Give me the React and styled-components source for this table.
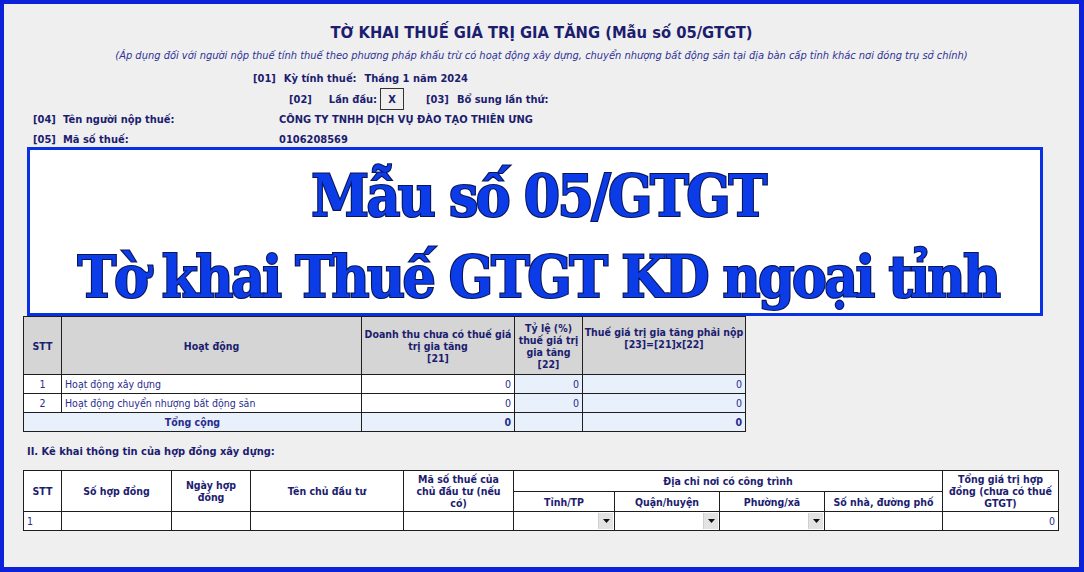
import React from 'react';
import styled, { createGlobalStyle } from 'styled-components';

const GlobalStyle = createGlobalStyle`
  html, body {
    margin: 0;
    padding: 0;
    background: #efefef;
  }
`;

const NAVY = '#1c1d6f';
const INK = '#2a2b8c';

const Frame = styled.div`
  box-sizing: border-box;
  width: 1084px;
  height: 572px;
  border-style: solid;
  border-color: #0b22d8;
  border-width: 4px 5px 5px 4px;
  background: #efefef;
  padding-top: 19px;
  font-family: "DejaVu Sans", sans-serif;
  font-stretch: condensed;
  color: ${NAVY};
  overflow: hidden;
`;

const Title = styled.div`
  text-align: center;
  font-size: 16.4px;
  font-weight: bold;
  line-height: 20px;
`;

const Subtitle = styled.div`
  text-align: center;
  font-size: 11px;
  font-style: italic;
  line-height: 20px;
  margin-top: 3px;
  color: #2e3296;
`;

const FieldRow = styled.div`
  display: flex;
  align-items: center;
  height: 20px;
  font-size: 11px;
  font-weight: bold;
  padding-left: ${(p) => p.$indent}px;
  gap: ${(p) => p.$gap ?? 8}px;
  margin-top: ${(p) => p.$top || 0}px;
`;

const Spaced = styled.span`
  margin-left: ${(p) => p.$ml || 0}px;
`;

const CheckBox = styled.span`
  box-sizing: border-box;
  width: 24px;
  height: 22px;
  margin-left: ${(p) => p.$ml || 0}px;
  border: 1px solid #333;
  display: flex;
  align-items: center;
  justify-content: center;
  font-weight: bold;
`;

const InfoRow = styled.div`
  display: grid;
  grid-template-columns: 30px 216px auto;
  align-items: center;
  height: 20px;
  padding-left: 29px;
  font-size: 11px;
  font-weight: bold;
`;

const Banner = styled.div`
  box-sizing: border-box;
  width: 1016px;
  height: 169px;
  margin: -2px 0 0 23px;
  border: 3px solid #0a30e4;
  background: #fff;
  display: flex;
  flex-direction: column;
  align-items: center;
  justify-content: flex-start;
  padding: 6px 0 0 6px;
`;

const BannerLine = styled.div`
  font-family: "DejaVu Serif", serif;
  font-weight: bold;
  font-stretch: condensed;
  font-size: 58px;
  line-height: 81px;
  letter-spacing: -2.5px;
  color: #0c3ce8;
  -webkit-text-stroke: 2.2px #0b1656;
  paint-order: stroke fill;
  white-space: nowrap;
`;

const Table = styled.table`
  border-collapse: collapse;
  table-layout: fixed;
  width: ${(p) => p.$w}px;
  margin-left: 19px;
  font-size: 10.5px;
`;

const Th = styled.th`
  border: 1px solid #1e1e1e;
  background: ${(p) => (p.$plain ? '#fff' : '#d5d5d5')};
  color: ${NAVY};
  font-weight: bold;
  line-height: 12px;
  padding: 0 1px;
  vertical-align: ${(p) => p.$valign || 'middle'};
  text-align: center;
  white-space: ${(p) => (p.$nowrap ? 'nowrap' : 'normal')};
  overflow: visible;
`;

const Td = styled.td`
  border: 1px solid #1e1e1e;
  background: ${(p) => (p.$tint ? '#e7f0fb' : '#fff')};
  color: ${INK};
  font-weight: ${(p) => (p.$bold ? 'bold' : 'normal')};
  text-align: ${(p) => p.$align || 'left'};
  padding: 0 3px;
  height: 18px;
  line-height: 18px;
  white-space: nowrap;
  overflow: hidden;
`;

const SectionTitle = styled.div`
  font-size: 11px;
  font-weight: bold;
  line-height: 20px;
  margin: 10px 0 8px 23px;
`;

const SelectCell = styled.td`
  border: 1px solid #1e1e1e;
  background: #fff;
  padding: 0;
  height: 18px;
`;

const SelectBox = styled.div`
  display: flex;
  justify-content: flex-end;
  height: 18px;
  padding: 1px 1px 1px 0;
  box-sizing: border-box;
`;

const SelectButton = styled.div`
  width: 14px;
  height: 16px;
  background: #e3e3e3;
  border-left: 1px solid #cfcfcf;
  display: flex;
  align-items: center;
  justify-content: center;
`;

const Select = () => (
  <SelectCell>
    <SelectBox>
      <SelectButton>
        <svg width="7" height="4" viewBox="0 0 7 4">
          <path d="M0 0h7L3.5 4z" fill="#111" />
        </svg>
      </SelectButton>
    </SelectBox>
  </SelectCell>
);

const activities = [
  { stt: 1, name: 'Hoạt động xây dựng', rate: '0' },
  { stt: 2, name: 'Hoạt động chuyển nhượng bất động sản', rate: '0' },
];

export default function App() {
  return (
    <>
      <GlobalStyle />
      <Frame>
        <Title>TỜ KHAI THUẾ GIÁ TRỊ GIA TĂNG (Mẫu số 05/GTGT)</Title>
        <Subtitle>
          (Áp dụng đối với người nộp thuế tính thuế theo phương pháp khấu trừ có hoạt động xây dựng, chuyển nhượng bất động sản tại địa bàn cấp tỉnh khác nơi đóng trụ sở chính)
        </Subtitle>
        <FieldRow $indent={249} $top={2}>
          <span>[01]</span>
          <span>Kỳ tính thuế:</span>
          <span>Tháng 1 năm 2024</span>
        </FieldRow>
        <FieldRow $indent={285} $gap={0} $top={1}>
          <span>[02]</span>
          <Spaced $ml={17}>Lần đầu:</Spaced>
          <CheckBox $ml={3}>X</CheckBox>
          <Spaced $ml={22}>[03]</Spaced>
          <Spaced $ml={8}>Bổ sung lần thứ:</Spaced>
        </FieldRow>
        <InfoRow>
          <span>[04]</span>
          <span>Tên người nộp thuế:</span>
          <span>CÔNG TY TNHH DỊCH VỤ ĐÀO TẠO THIÊN ƯNG</span>
        </InfoRow>
        <InfoRow>
          <span>[05]</span>
          <span>Mã số thuế:</span>
          <span>0106208569</span>
        </InfoRow>

        <Banner>
          <BannerLine>Mẫu số 05/GTGT</BannerLine>
          <BannerLine>Tờ khai Thuế GTGT KD ngoại tỉnh</BannerLine>
        </Banner>

        <Table $w={722}>
          <colgroup>
            <col style={{ width: 38 }} />
            <col style={{ width: 300 }} />
            <col style={{ width: 153 }} />
            <col style={{ width: 68 }} />
            <col style={{ width: 163 }} />
          </colgroup>
          <thead>
            <tr style={{ height: 58 }}>
              <Th>STT</Th>
              <Th>Hoạt động</Th>
              <Th $nowrap>
                Doanh thu chưa có thuế giá
                <br />
                trị gia tăng
                <br />
                [21]
              </Th>
              <Th $nowrap>
                Tỷ lệ (%)
                <br />
                thuế giá trị
                <br />
                gia tăng
                <br />
                [22]
              </Th>
              <Th $nowrap $valign="top" style={{ paddingTop: 9 }}>
                Thuế giá trị gia tăng phải nộp
                <br />
                [23]=[21]x[22]
              </Th>
            </tr>
          </thead>
          <tbody>
            {activities.map((a) => (
              <tr key={a.stt}>
                <Td $align="center">{a.stt}</Td>
                <Td>{a.name}</Td>
                <Td $align="right">0</Td>
                <Td $align="right" $tint>{a.rate}</Td>
                <Td $align="right" $tint>0</Td>
              </tr>
            ))}
            <tr>
              <Td colSpan={2} $align="center" $bold $tint>Tổng cộng</Td>
              <Td $align="right" $bold $tint>0</Td>
              <Td $tint />
              <Td $align="right" $bold $tint>0</Td>
            </tr>
          </tbody>
        </Table>

        <SectionTitle>II. Kê khai thông tin của hợp đồng xây dựng:</SectionTitle>

        <Table $w={1035}>
          <colgroup>
            {[38, 110, 79, 153, 110, 101, 105, 105, 118, 116].map((w, i) => (
              <col key={i} style={{ width: w }} />
            ))}
          </colgroup>
          <thead>
            <tr style={{ height: 21 }}>
              <Th $plain rowSpan={2}>STT</Th>
              <Th $plain rowSpan={2}>Số hợp đồng</Th>
              <Th $plain rowSpan={2}>Ngày hợp<br />đồng</Th>
              <Th $plain rowSpan={2}>Tên chủ đầu tư</Th>
              <Th $plain rowSpan={2}>Mã số thuế của<br />chủ đầu tư (nếu<br />có)</Th>
              <Th $plain colSpan={4}>Địa chỉ nơi có công trình</Th>
              <Th $plain $nowrap rowSpan={2}>Tổng giá trị hợp<br />đồng (chưa có thuế<br />GTGT)</Th>
            </tr>
            <tr style={{ height: 20 }}>
              <Th $plain>Tỉnh/TP</Th>
              <Th $plain>Quận/huyện</Th>
              <Th $plain>Phường/xã</Th>
              <Th $plain $nowrap>Số nhà, đường phố</Th>
            </tr>
          </thead>
          <tbody>
            <tr>
              <Td>1</Td>
              <Td />
              <Td />
              <Td />
              <Td />
              <Select />
              <Select />
              <Select />
              <Td />
              <Td $align="right">0</Td>
            </tr>
          </tbody>
        </Table>
      </Frame>
    </>
  );
}
